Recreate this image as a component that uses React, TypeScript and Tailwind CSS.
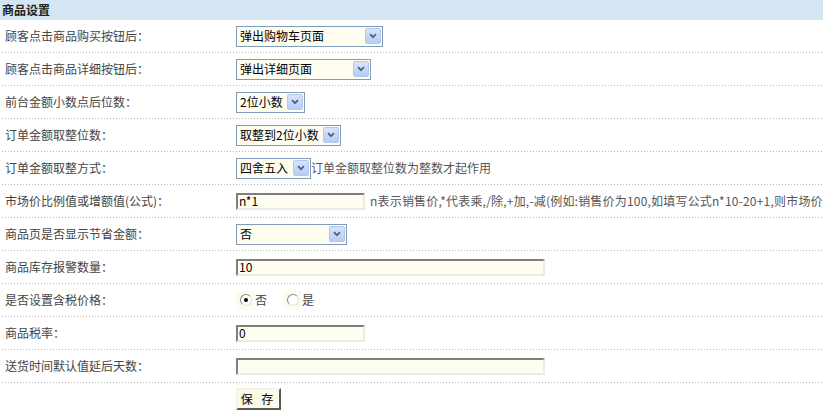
import React from "react";

const font = "font-['SimSun','Noto_Sans_CJK_SC',sans-serif]";

function Arrow() {
  return (
    <span className="flex h-[16px] w-[16px] shrink-0 items-center justify-center rounded-[2px] border border-[#b4c8ee] bg-[linear-gradient(to_bottom,#d7e3fb,#b7cdf5)]">
      <svg width="8" height="6" viewBox="0 0 8 6">
        <path d="M1 1.2 L4 4.2 L7 1.2" fill="none" stroke="#4d6185" strokeWidth="1.8" />
      </svg>
    </span>
  );
}

function Select({ value, width }: { value: string; width: string }) {
  return (
    <div
      className={`flex h-[21px] items-center justify-between border border-[#7f9db9] bg-[#fffdf0] pl-[3px] pr-[1px] text-[12px] leading-none text-black ${width}`}
    >
      <span className="whitespace-nowrap">{value}</span>
      <Arrow />
    </div>
  );
}

function TextInput({ value, width }: { value: string; width: string }) {
  return (
    <div
      className={`flex h-[17px] items-center border-2 border-t-[#808078] border-l-[#808078] border-b-[#ecebe0] border-r-[#ecebe0] bg-[#fffdf0] pl-[1px] text-[12px] leading-none text-black ${width}`}
    >
      {value}
    </div>
  );
}

function Radio({ checked, label }: { checked: boolean; label: string }) {
  return (
    <label className="flex items-center text-[12px] text-[#444]">
      <span className="flex h-[19px] w-[19px] items-center justify-center bg-[#fdfbec]">
        <span className="flex h-[12px] w-[12px] items-center justify-center rounded-full border border-t-[#8a8a84] border-l-[#8a8a84] border-b-[#e4e3da] border-r-[#e4e3da] bg-white">
          {checked && <span className="h-[4px] w-[4px] rounded-full bg-black" />}
        </span>
      </span>
      {label}
    </label>
  );
}

function Row({ label, children }: { label: string; children?: React.ReactNode }) {
  return (
    <div className="flex h-[33px] items-center bg-[linear-gradient(to_right,#b4b4b4_1px,transparent_1px)] bg-[length:3px_1px] bg-bottom bg-repeat-x pb-[1px]">
      <div className="w-[236px] shrink-0 whitespace-nowrap pl-[5px] text-[12px] text-[#444]">{label}</div>
      <div className="flex items-center whitespace-nowrap">{children}</div>
    </div>
  );
}

export default function App() {
  return (
    <div className={`h-[413px] w-[823px] overflow-hidden bg-white ${font}`}>
      <div className="flex h-[20px] items-center bg-[#d3e6f1] pl-[2px] text-[12px] font-bold text-[#222]">
        商品设置
      </div>
      <Row label="顾客点击商品购买按钮后：">
        <Select value="弹出购物车页面" width="w-[147px]" />
      </Row>
      <Row label="顾客点击商品详细按钮后：">
        <Select value="弹出详细页面" width="w-[135px]" />
      </Row>
      <Row label="前台金额小数点后位数：">
        <Select value="2位小数" width="w-[69px]" />
      </Row>
      <Row label="订单金额取整位数：">
        <Select value="取整到2位小数" width="w-[105px]" />
      </Row>
      <Row label="订单金额取整方式：">
        <Select value="四舍五入" width="w-[75px]" />
        <span className="text-[12px] text-[#555]">订单金额取整位数为整数才起作用</span>
      </Row>
      <Row label="市场价比例值或增额值(公式)：">
        <TextInput value="n*1" width="w-[129px]" />
        <span className="ml-[5px] text-[12px] tracking-[0.2px] text-[#555]">
          n表示销售价,*代表乘,/除,+加,-减(例如:销售价为100,如填写公式n*10-20+1,则市场价为981)
        </span>
      </Row>
      <Row label="商品页是否显示节省金额：">
        <Select value="否" width="w-[111px]" />
      </Row>
      <Row label="商品库存报警数量：">
        <TextInput value="10" width="w-[309px]" />
      </Row>
      <Row label="是否设置含税价格：">
        <div className="flex items-center gap-[16px]">
          <Radio checked label="否" />
          <Radio checked={false} label="是" />
        </div>
      </Row>
      <Row label="商品税率：">
        <TextInput value="0" width="w-[129px]" />
      </Row>
      <Row label="送货时间默认值延后天数：">
        <TextInput value="" width="w-[309px]" />
      </Row>
      <div className="flex pl-[236px] pt-[5px]">
        <button className="flex h-[22px] w-[45px] items-center justify-center border-2 border-t-[#f4f3ea] border-l-[#f4f3ea] border-b-[#5a5a54] border-r-[#5a5a54] bg-[#fdfaea] text-[12px] tracking-[3px] text-black">
          保 存
        </button>
      </div>
    </div>
  );
}
